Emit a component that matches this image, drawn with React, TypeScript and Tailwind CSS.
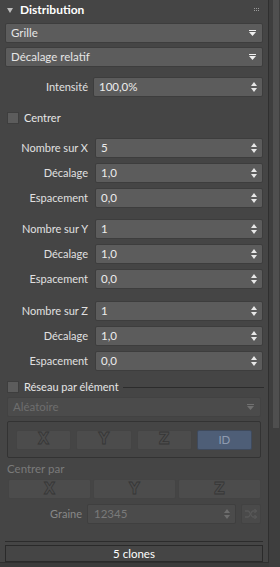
import React from "react";

const font = { fontFamily: 'Lato, "Open Sans", sans-serif' };

function DropArrow({ color = "#f0f0f0" }: { color?: string }) {
  return (
    <svg width="7" height="6" viewBox="0 0 7 6">
      <rect x="0" y="0" width="7" height="1" fill={color} />
      <polygon points="0,2 7,2 3.5,6" fill={color} />
    </svg>
  );
}

function Spinner({ color = "#e8e8e8" }: { color?: string }) {
  return (
    <svg width="6" height="10" viewBox="0 0 6 10">
      <polygon points="3,0 6,4 0,4" fill={color} />
      <polygon points="0,6 6,6 3,10" fill={color} />
    </svg>
  );
}

function Dropdown({ label, disabled = false }: { label: string; disabled?: boolean }) {
  return (
    <div
      className={
        "flex h-[20px] items-center justify-between rounded-[2px] border pl-[5px] pr-[6px] text-[11.5px] " +
        (disabled
          ? "border-[#424242] bg-[#4b4b4b] text-[#6e6e6e]"
          : "border-[#3d3d3d] bg-[#5c5c5c] text-[#e6e6e6]")
      }
    >
      <span>{label}</span>
      <DropArrow color={disabled ? "#707070" : "#f0f0f0"} />
    </div>
  );
}

function SpinRow({ label, value, fieldLeft = 7 }: { label: string; value: string; fieldLeft?: number }) {
  return (
    <div className="flex h-[20px] items-center pr-[5px]">
      <div className="w-[88px] text-right text-[11px] text-[#e0e0e0]">{label}</div>
      <div
        className={
          "flex h-[20px] flex-1 items-center justify-between rounded-[2px] border border-[#3d3d3d] bg-[#5c5c5c] pl-[5px] pr-[5px] text-[11.5px] text-[#ececec] " +
          (fieldLeft === 5 ? "ml-[5px]" : "ml-[7px]")
        }
      >
        <span>{value}</span>
        <Spinner />
      </div>
    </div>
  );
}

function Checkbox({ label, line = false }: { label: string; line?: boolean }) {
  return (
    <div className="flex h-[12px] items-center pl-[7px] pr-[4px]">
      <div className="h-[12px] w-[12px] border border-[#3e3e3e] bg-[#5c5c5c]" />
      <span className="ml-[5px] text-[11px] text-[#e6e6e6]">{label}</span>
      {line && <div className="ml-[4px] h-px flex-1 bg-[#2c2c2c]" />}
    </div>
  );
}

function OutlineLetter({ ch }: { ch: string }) {
  return (
    <span
      className="text-[15px] font-bold leading-none text-[#4c4c4c] [-webkit-text-stroke:0.8px_#363636]"
      style={{ fontFamily: '"DejaVu Sans", sans-serif' }}
    >
      {ch}
    </span>
  );
}

export default function App() {
  return (
    <div className="flex h-[567px] w-[280px] bg-[#3b3b3b]" style={font}>
      <div className="flex h-[563px] w-[269px] flex-col border-r border-b border-[#2f2f2f] bg-[#454545]">
        {/* header */}
        <div className="flex h-[20px] items-center pl-[7px] pr-[8px]">
          <svg width="6" height="5" viewBox="0 0 6 5">
            <polygon points="0,0 6,0 3,5" fill="#bdbdbd" />
          </svg>
          <span className="ml-[7px] text-[12px] font-bold text-white">Distribution</span>
          <div className="flex-1" />
          <svg width="6" height="4" viewBox="0 0 6 4">
            {[0, 2, 4].map((x) =>
              [0, 2].map((y) => <rect key={`${x}-${y}`} x={x} y={y} width="1" height="1" fill="#9a9a9a" />)
            )}
          </svg>
        </div>

        <div className="mt-[3px] px-[5px]">
          <Dropdown label="Grille" />
        </div>
        <div className="mt-[4px] px-[5px]">
          <Dropdown label="Décalage relatif" />
        </div>

        <div className="mt-[10px]">
          <SpinRow label="Intensité" value="100,0%" fieldLeft={5} />
        </div>

        <div className="mt-[15px]">
          <Checkbox label="Centrer" />
        </div>

        <div className="mt-[14px] flex flex-col gap-[5px]">
          <SpinRow label="Nombre sur X" value="5" />
          <SpinRow label="Décalage" value="1,0" />
          <SpinRow label="Espacement" value="0,0" />
        </div>
        <div className="mt-[11px] flex flex-col gap-[5px]">
          <SpinRow label="Nombre sur Y" value="1" />
          <SpinRow label="Décalage" value="1,0" />
          <SpinRow label="Espacement" value="0,0" />
        </div>
        <div className="mt-[12px] flex flex-col gap-[5px]">
          <SpinRow label="Nombre sur Z" value="1" />
          <SpinRow label="Décalage" value="1,0" />
          <SpinRow label="Espacement" value="0,0" />
        </div>

        <div className="mt-[10px]">
          <Checkbox label="Réseau par élément" line />
        </div>

        <div className="mt-[4px] pl-[7px] pr-[7px]">
          <Dropdown label="Aléatoire" disabled />
        </div>

        <div className="mx-[7px] mt-[4px] flex h-[37px] items-center gap-[5px] rounded-[2px] border border-[#333333] px-[8px]">
          {["X", "Y", "Z"].map((c) => (
            <div
              key={c}
              className="flex h-[20px] flex-1 items-center justify-center rounded-[2px] border border-[#444444] bg-[#4c4c4c]"
            >
              <OutlineLetter ch={c} />
            </div>
          ))}
          <div className="flex h-[20px] flex-1 items-center justify-center rounded-[2px] border border-[#3f4a5c] bg-[#4e5e77] text-[11.5px] text-[#8f9bb0]">
            ID
          </div>
        </div>

        <div className="mt-[3px] pl-[7px] text-[11.5px] leading-[16px] text-[#7a7a7a]">Centrer par</div>

        <div className="mt-[2px] flex gap-[2px] pl-[8px] pr-[7px]">
          {["X", "Y", "Z"].map((c) => (
            <div
              key={c}
              className="flex h-[20px] flex-1 items-center justify-center rounded-[2px] border border-[#444444] bg-[#4c4c4c]"
            >
              <OutlineLetter ch={c} />
            </div>
          ))}
        </div>

        <div className="mt-[5px] flex h-[20px] items-center pr-[7px]">
          <div className="w-[82px] text-right text-[11px] text-[#888888]">Graine</div>
          <div className="ml-[5px] flex h-[20px] flex-1 items-center justify-between rounded-[2px] border border-[#3f3f3f] bg-[#4b4b4b] pl-[6px] pr-[5px] text-[11.5px] text-[#7a7a7a]">
            <span>12345</span>
            <Spinner color="#6e6e6e" />
          </div>
          <div className="ml-[5px] flex h-[20px] w-[20px] items-center justify-center rounded-[2px] border border-[#424242] bg-[#4a4a4a]">
            <svg width="14" height="12" viewBox="0 0 14 12" fill="none" stroke="#585858" strokeWidth="1.3">
              <path d="M1 3h3c2 0 3 6 5 6h3" />
              <path d="M1 9h3c2 0 3-6 5-6h3" />
              <path d="M10.5 1.2 12.5 3 10.5 4.8" />
              <path d="M10.5 7.2 12.5 9 10.5 10.8" />
            </svg>
          </div>
        </div>

        <div className="mx-[5px] mt-[17px] h-px bg-[#2c2c2c]" />

        <div className="mx-[5px] mt-[3px] flex h-[17px] items-center justify-center border border-[#2a2a2a] text-[11.5px] text-white">
          5 clones
        </div>
      </div>

      <div className="flex w-[11px] justify-center bg-[#3e3e3e] pt-0">
        <div className="ml-[2px] h-[428px] w-[6px] bg-[#4f4f4f]" />
      </div>
    </div>
  );
}
